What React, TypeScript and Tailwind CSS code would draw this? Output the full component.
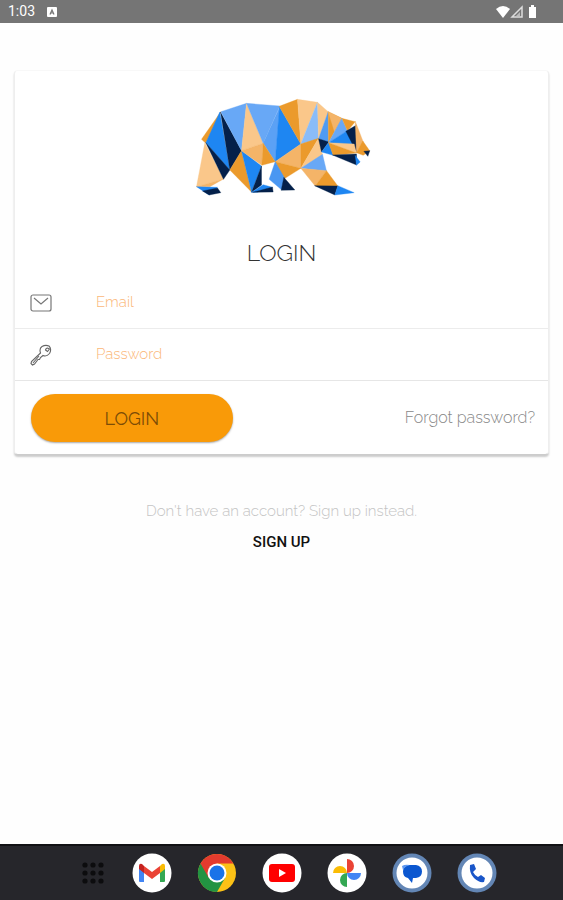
type Facet = { fill: string; points: string };

const BLUE = '#1e86f2';
const SKY = '#68a8f6';
const NAVY = '#04204a';
const GOLD = '#eb9a2c';
const PEACH = '#fac78a';
const SAND = '#f4b468';

const facets: Facet[] = [
    // Hind quarters
    { fill: GOLD, points: '95,65 37,148 50,160' },
    { fill: BLUE, points: '92,66 50,158 122,240' },
    { fill: NAVY, points: '94,66 157,182 122,240' },
    { fill: PEACH, points: '47,158 22,290 103,267' },
    { fill: SAND, points: '22,290 103,267 62,290' },
    { fill: NAVY, points: '50,158 122,240 103,268' },
    { fill: BLUE, points: '22,290 85,292 60,315' },
    { fill: NAVY, points: '40,303 85,294 95,308 60,315' },
    { fill: GOLD, points: '157,182 122,240 187,306' },
    { fill: BLUE, points: '157,182 217,228 187,306' },
    { fill: NAVY, points: '217,228 217,285 187,307' },
    { fill: BLUE, points: '187,307 222,284 250,292 205,307' },
    { fill: NAVY, points: '190,307 250,291 252,306' },
    // Back and belly
    { fill: SKY, points: '95,65 172,40 157,182' },
    { fill: PEACH, points: '172,40 157,182 222,160' },
    { fill: SKY, points: '172,40 222,160 272,48' },
    { fill: '#5ba1f5', points: '272,50 222,160 258,215' },
    { fill: SAND, points: '222,160 157,182 218,226' },
    { fill: GOLD, points: '222,160 258,215 218,226' },
    { fill: BLUE, points: '271,50 258,215 335,162' },
    // Shoulder
    { fill: GOLD, points: '270,49 325,28 335,162' },
    { fill: PEACH, points: '325,28 385,37 335,162' },
    { fill: '#8abcf8', points: '385,37 335,162 388,147' },
    { fill: PEACH, points: '385,37 417,65 388,147' },
    { fill: '#4f9bf3', points: '417,65 388,147 418,158' },
    // Front legs
    { fill: SAND, points: '258,215 335,162 335,235' },
    { fill: GOLD, points: '335,162 388,145 335,235' },
    { fill: PEACH, points: '388,145 400,194 335,235' },
    { fill: GOLD, points: '258,215 335,235 284,267' },
    { fill: '#4a97f2', points: '258,215 240,268 278,300 285,262' },
    { fill: NAVY, points: '284,262 317,300 276,301' },
    { fill: SKY, points: '400,193 335,235 412,243' },
    { fill: SAND, points: '335,235 412,242 378,288' },
    { fill: GOLD, points: '412,242 378,288 446,288' },
    { fill: NAVY, points: '376,287 446,288 437,315' },
    { fill: BLUE, points: '446,287 437,315 495,308' },
    // Head
    { fill: NAVY, points: '388,146 419,156 397,186' },
    { fill: BLUE, points: '419,156 397,186 432,196' },
    { fill: GOLD, points: '417,65 418,158 458,85' },
    { fill: SAND, points: '417,65 458,85 436,125' },
    { fill: SKY, points: '458,85 418,158 475,123' },
    { fill: GOLD, points: '458,85 498,95 475,123' },
    { fill: BLUE, points: '475,122 418,158 502,165' },
    { fill: NAVY, points: '502,105 470,124 503,188' },
    { fill: SAND, points: '498,93 522,155 502,188' },
    { fill: PEACH, points: '418,158 495,162 502,189' },
    { fill: GOLD, points: '418,158 432,196 502,189' },
    { fill: NAVY, points: '430,195 502,192 502,225' },
    { fill: BLUE, points: '498,196 513,216 502,226' },
    { fill: GOLD, points: '502,188 521,153 542,183 522,196' },
    { fill: NAVY, points: '524,184 542,182 536,199' },
];

function BearLogo() {
    return (
        <svg viewBox="0 0 545 336" className="mt-[19px] mr-1 h-28 w-[182px]" role="img" aria-label="Bear">
            {facets.map((facet) => (
                <polygon
                    key={facet.points}
                    points={facet.points}
                    fill={facet.fill}
                    stroke={facet.fill}
                    strokeWidth="1"
                    strokeLinejoin="round"
                />
            ))}
        </svg>
    );
}

function StatusBar() {
    return (
        <header className="flex h-[23px] items-center bg-[#757575] px-2 font-['Roboto',sans-serif] text-[14px] text-white">
            <span>1:03</span>
            <svg viewBox="0 0 10 10" className="ml-3 size-[10px]">
                <rect width="10" height="10" rx="1" fill="#fff" />
                <path d="M3 7.500 5 3l2 4.500M3.800 6h2.400" stroke="#757575" strokeWidth="1.200" fill="none" />
            </svg>
            <svg viewBox="0 0 44 14" className="mr-4 ml-auto h-[14px] w-11" fill="#fff">
                <path d="M1 4Q8-2 15 4L8 13Z" />
                <path d="M27 2v10H17Z" fill="none" stroke="#ddd" strokeWidth="1.500" />
                <path d="M25 7v4h-4Z" fill="#bbb" />
                <path d="M34 2h2V0h3v2h2v11h-7Z" />
            </svg>
        </header>
    );
}

function LoginCard() {
    return (
        <form
            className="mx-[14px] mt-[47px] flex flex-col rounded-sm border border-t-[#f8f8f8] border-r-[#eee] border-b-[#ccc] border-l-[#eee] bg-white shadow-[0_2px_2px_rgba(0,0,0,0.2)]"
            onSubmit={(e) => e.preventDefault()}
        >
            <div className="flex flex-col items-center">
                <BearLogo />
                <h1 className="mt-[35px] text-[23px] leading-8 font-light text-[#333]">LOGIN</h1>
            </div>

            <label className="mt-2 flex h-[52px] items-center border-b border-[#ececec] pl-[15px]">
                <svg viewBox="0 0 22 18" className="h-[18px] w-[22px]" fill="none" stroke="#777" strokeWidth="1.200">
                    <rect x="1" y="1" width="20" height="16" rx="2" />
                    <path d="m4 4 7 6 7-6" />
                </svg>
                <input
                    type="email"
                    aria-label="Email"
                    placeholder="Email"
                    className="ml-11 min-w-0 flex-1 text-[15px] font-light outline-none placeholder:text-[#fbb778]"
                />
            </label>
            <label className="flex h-[52px] items-center border-b border-[#e6e6e6] pl-[15px]">
                <svg viewBox="0 0 22 22" className="size-[22px]" fill="none" stroke="#666" strokeWidth="1.100">
                    <path d="M10.500 9Q9 4.500 12 2.500 15.500.500 19 2 22 5 19.500 9.500 16.500 13 13 11.500L10.500 13.500 9.500 15.500H8L4.500 20 2.500 21 1 19.500 1.500 17.500Z" />
                    <path d="m3 19 6-7M15.500 6q.500-2 2-2l2 1-2 2.500Z" />
                </svg>
                <input
                    type="password"
                    aria-label="Password"
                    placeholder="Password"
                    className="ml-11 min-w-0 flex-1 text-[15px] font-light outline-none placeholder:text-[#fbb778]"
                />
            </label>

            <div className="flex items-center justify-between pt-[13px] pr-[13px] pb-3 pl-4">
                <button
                    type="submit"
                    className="h-12 w-2/5 rounded-full bg-[#f99a08] text-[18px] text-[#7c4c06] shadow-[0_1px_2px_rgba(0,0,0,0.35)]"
                >
                    LOGIN
                </button>
                <a href="#forgot" className="text-[16px] font-light text-[#888]">
                    Forgot password?
                </a>
            </div>
        </form>
    );
}

function AppDock() {
    return (
        <nav className="flex h-14 items-center justify-center gap-[25px] border-t-2 border-[#111114] bg-[#26262b] pl-[14px]">
            <button type="button" aria-label="All apps" className="mr-[2px] flex size-6 items-center justify-center">
                <svg viewBox="0 0 22 22" className="size-[22px]" fill="#0c0c0e">
                    {[3, 11, 19].map((y) => [3, 11, 19].map((x) => <circle key={`${x}-${y}`} cx={x} cy={y} r="2.600" />))}
                </svg>
            </button>
            <button type="button" aria-label="Gmail">
                <svg viewBox="0 0 40 40" className="size-10">
                    <circle cx="20" cy="20" r="19.500" fill="#fff" />
                    <path d="M7 13v15q0 1 1 1h4V17Z" fill="#4285f4" />
                    <path d="M33 13v15q0 1-1 1h-4V17Z" fill="#34a853" />
                    <path d="m28 13 2-2q3-1 3 2v3l-5 4Z" fill="#fbbc04" />
                    <path d="M12 13v7l8 6 8-6v-7l-8 6Z" fill="#ea4335" />
                    <path d="M7 16v-3q0-3 3-2l2 2v7Z" fill="#c5221f" />
                </svg>
            </button>
            <button type="button" aria-label="Chrome">
                <svg viewBox="0 0 40 40" className="size-10">
                    <circle cx="20" cy="20" r="19" fill="#fbc116" />
                    <path d="M20 20 3.500 10.500A19 19 0 0 0 20 39l8-14Z" fill="#229342" />
                    <path d="M20 20 3.500 10.500A19 19 0 0 1 36.500 10.500H20Z" fill="#e33b2e" />
                    <path d="m3.500 10.500 8 14L20 20V10.500Z" fill="#e33b2e" />
                    <circle cx="20" cy="20" r="9.500" fill="#fff" />
                    <circle cx="20" cy="20" r="7.500" fill="#1a73e8" />
                </svg>
            </button>
            <button type="button" aria-label="YouTube">
                <svg viewBox="0 0 40 40" className="size-10">
                    <circle cx="20" cy="20" r="19.500" fill="#fff" />
                    <rect x="7" y="11" width="26" height="18" rx="3" fill="#f00" />
                    <path d="m17 16 7 4-7 4Z" fill="#fff" />
                </svg>
            </button>
            <button type="button" aria-label="Photos">
                <svg viewBox="0 0 40 40" className="size-10">
                    <circle cx="20" cy="20" r="19.500" fill="#fff" />
                    <path d="M20 6a7 7 0 0 1 0 14Z" fill="#ea4335" />
                    <path d="M34 20a7 7 0 0 1-14 0Z" fill="#4285f4" />
                    <path d="M20 34a7 7 0 0 1 0-14Z" fill="#34a853" />
                    <path d="M6 20a7 7 0 0 1 14 0Z" fill="#fbbc04" />
                </svg>
            </button>
            <button type="button" aria-label="Messages">
                <svg viewBox="0 0 40 40" className="size-10">
                    <circle cx="20" cy="20" r="19.500" fill="#6386b5" />
                    <circle cx="20" cy="20" r="15.500" fill="#fff" />
                    <path d="M17 12h7q6 1 6 6.500T24 25h-3l-1 5-4-5q-5-1-5-6.500T17 12Z" fill="#0b57d0" />
                    <path d="M10 13q3-2 8-1-5 1-7 5Z" fill="#5d97f0" />
                </svg>
            </button>
            <button type="button" aria-label="Phone">
                <svg viewBox="0 0 40 40" className="size-10">
                    <circle cx="20" cy="20" r="19.500" fill="#6386b5" />
                    <circle cx="20" cy="20" r="15.500" fill="#fff" />
                    <path d="m13 12 4-1 2 5-3 3q2 4 5 5l3-2 4 3-1 4q-5 1-10-4t-4-13Z" fill="#1a56c9" />
                </svg>
            </button>
        </nav>
    );
}

export default function App() {
    return (
        <div className="flex min-h-screen flex-col bg-[#fefefe] font-['Raleway','Lato',sans-serif]">
            <StatusBar />
            <main className="flex-1">
                <LoginCard />
                <div className="mt-11 flex flex-col items-center">
                    <p className="text-[15px] leading-6 font-light text-[#c4c4c4]">Don't have an account? Sign up instead.</p>
                    <a href="#signup" className="mt-[7px] font-['Roboto',sans-serif] text-[15px] leading-6 font-medium text-[#111]">
                        SIGN UP
                    </a>
                </div>
            </main>
            <AppDock />
        </div>
    );
}
